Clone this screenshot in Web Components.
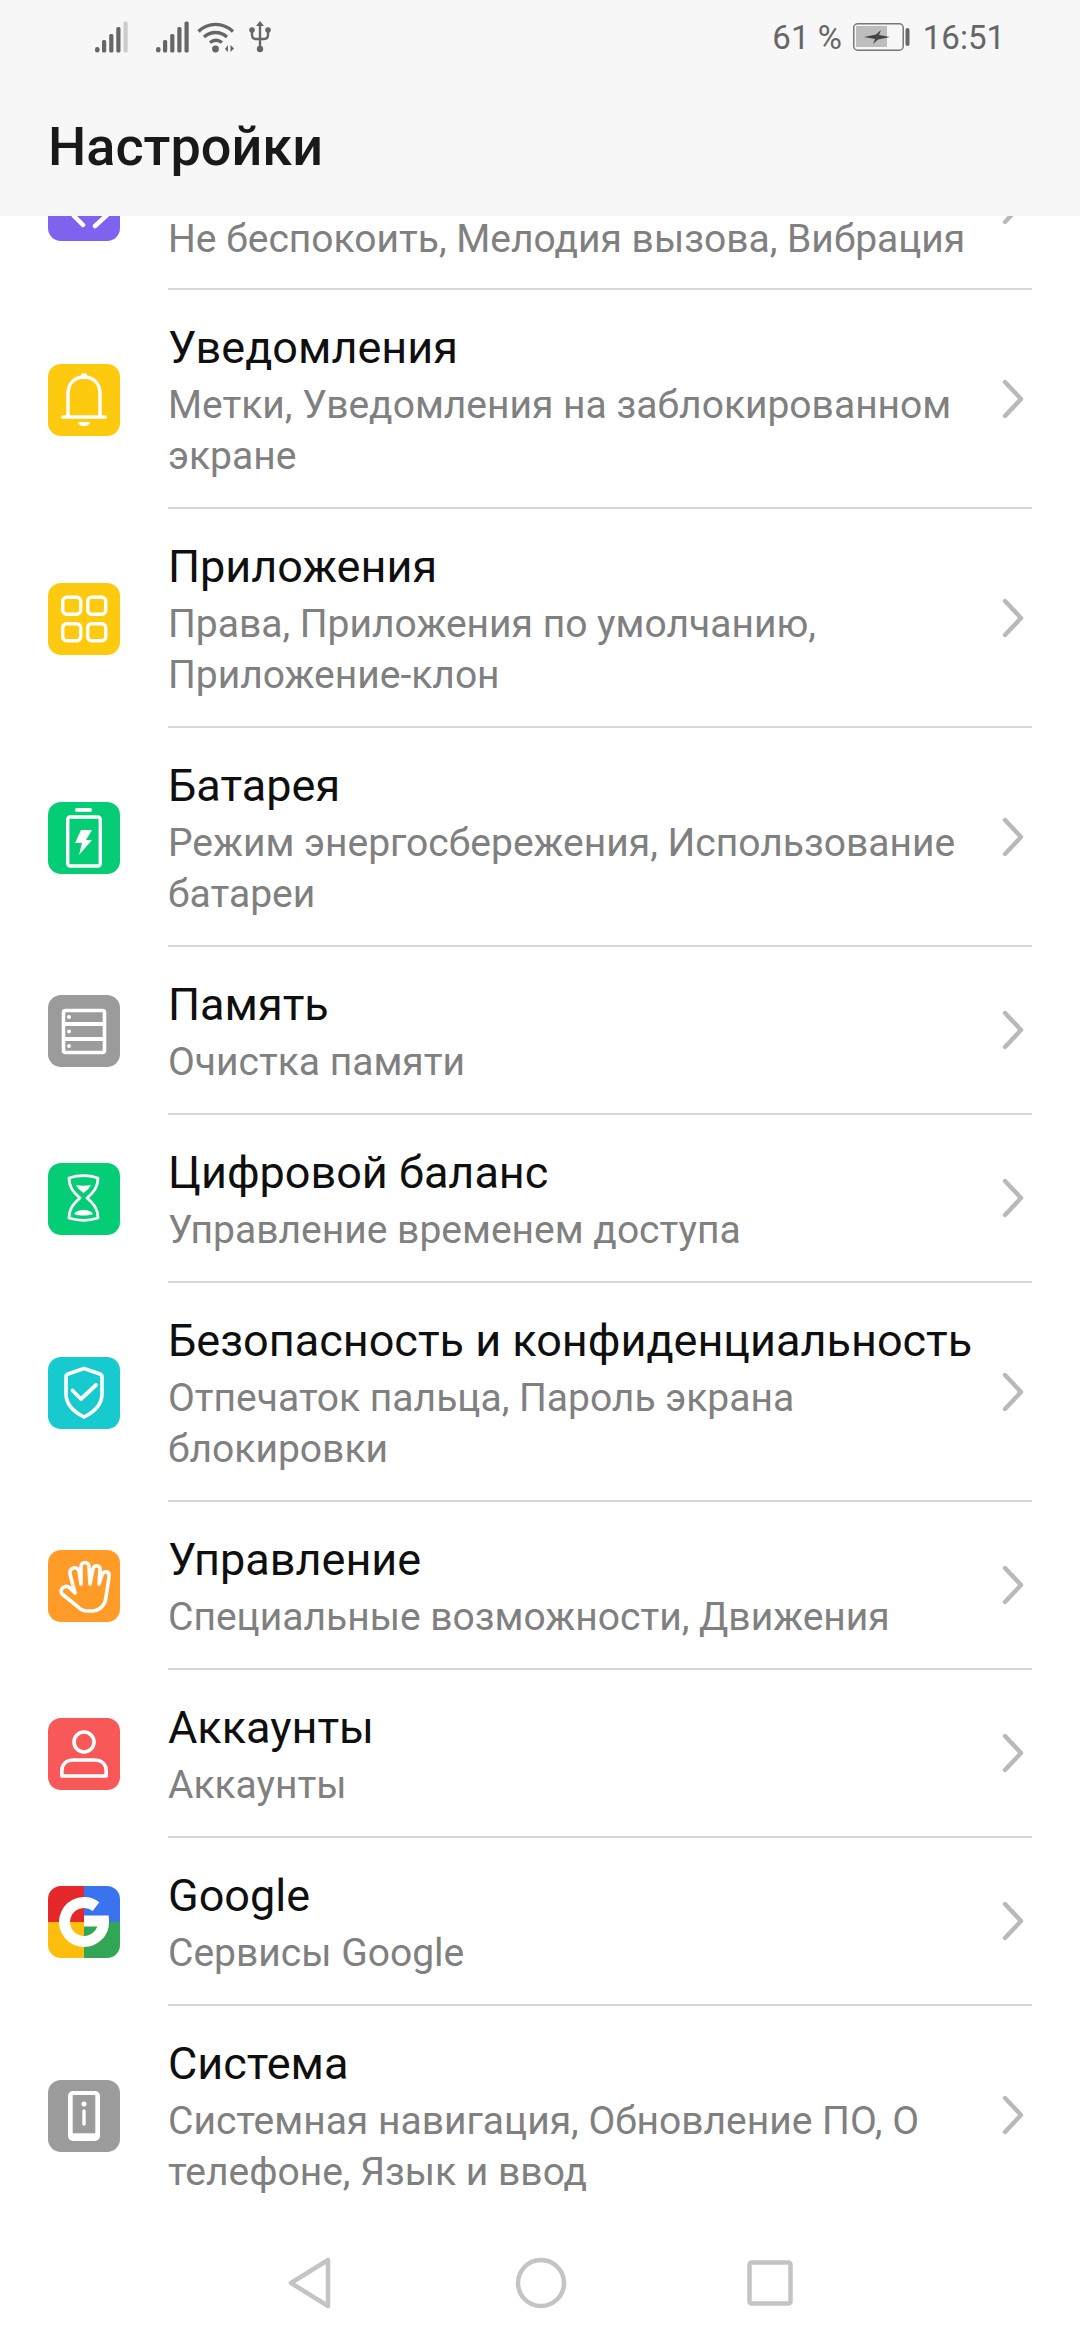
<!DOCTYPE html>
<html lang="ru">
<head>
<meta charset="utf-8">
<title>Настройки</title>
<style>
  html, body { margin: 0; height: 100%; background: #fff; }
  body { font-family: Roboto, "Noto Sans", sans-serif; }
</style>
</head>
<body>
<settings-app>
  <status-bar slot="status"></status-bar>
  <page-title slot="title">Настройки</page-title>

  <settings-row cut>
    <svg slot="icon" viewBox="0 0 72 72"><rect width="72" height="72" rx="13" fill="#7f63ee"/><path d="M35 56L26 47M47 57l12-11" fill="none" stroke="#fff" stroke-width="4.500" stroke-linecap="round"/></svg>
    <span slot="sub">Не беспокоить, Мелодия вызова, Вибрация</span>
  </settings-row>

  <settings-row>
    <svg slot="icon" viewBox="0 0 72 72"><rect width="72" height="72" rx="13" fill="#fdca10"/><path d="M20 52V30c0-11 7-17 16-17s16 6 16 17v22" fill="none" stroke="#fff" stroke-width="3.400"/><path d="M15 53h42" stroke="#fff" stroke-width="3.600" stroke-linecap="round"/><circle cx="36" cy="12" r="3" fill="#fff"/><path d="M30 58h12c-1 3-3 4-6 4s-5-1-6-4z" fill="#fff"/></svg>
    <span slot="title">Уведомления</span>
    <span slot="sub">Метки, Уведомления на заблокированном экране</span>
  </settings-row>

  <settings-row>
    <svg slot="icon" viewBox="0 0 72 72"><rect width="72" height="72" rx="13" fill="#fdca10"/><g fill="none" stroke="#fff" stroke-width="3.400"><rect x="14.700" y="14.300" width="18" height="17" rx="4"/><rect x="39.700" y="14.300" width="18" height="17" rx="4"/><rect x="14.700" y="40.700" width="18" height="17" rx="4"/><rect x="39.700" y="40.700" width="18" height="17" rx="4"/></g></svg>
    <span slot="title">Приложения</span>
    <span slot="sub">Права, Приложения по умолчанию, Приложение-клон</span>
  </settings-row>

  <settings-row>
    <svg slot="icon" viewBox="0 0 72 72"><rect width="72" height="72" rx="13" fill="#05cd75"/><rect x="27" y="6" width="17" height="3.800" rx="1.900" fill="#fff"/><rect x="19.700" y="15" width="32.600" height="49" rx="2.500" fill="none" stroke="#fff" stroke-width="3.400"/><path d="M33 28h11l-6 10h6L31 53l3-12h-7z" fill="#fff"/></svg>
    <span slot="title">Батарея</span>
    <span slot="sub">Режим энергосбережения, Использование батареи</span>
  </settings-row>

  <settings-row>
    <svg slot="icon" viewBox="0 0 72 72"><rect width="72" height="72" rx="13" fill="#9b9b9b"/><rect x="15.500" y="15.500" width="41" height="42" rx="2" fill="none" stroke="#fff" stroke-width="3.600"/><path d="M15 29h42M15 44h42" stroke="#fff" stroke-width="4"/><g fill="#fff"><circle cx="21" cy="22" r="2"/><circle cx="21" cy="36.500" r="2"/><circle cx="21" cy="51" r="2"/></g></svg>
    <span slot="title">Память</span>
    <span slot="sub">Очистка памяти</span>
  </settings-row>

  <settings-row>
    <svg slot="icon" viewBox="0 0 72 72"><rect width="72" height="72" rx="13" fill="#05cd75"/><path d="M21 15c9-3 20-3 29 0 0 8-3 13-11 20 8 7 11 12 11 20-9 3-20 3-29 0 0-8 3-13 11-20-8-7-11-12-11-20z" fill="none" stroke="#fff" stroke-width="2.800" stroke-linejoin="round"/><path d="M28 22c5 1 10 1 15 0-1 3-4 5-7.500 8C32 27 29 25 28 22zM26 51c2-3 5-4 9.500-4s7.500 1 9.500 4c-6 2-13 2-19 0z" fill="#fff"/></svg>
    <span slot="title">Цифровой баланс</span>
    <span slot="sub">Управление временем доступа</span>
  </settings-row>

  <settings-row>
    <svg slot="icon" viewBox="0 0 72 72"><rect width="72" height="72" rx="13" fill="#17cad0"/><path d="M36 11.500L52 17c1.500.5 2 1.500 2 3v17c0 11-8 18-18 23-10-5-18-12-18-23V20c0-1.500.5-2.500 2-3z" fill="none" stroke="#fff" stroke-width="3.600" stroke-linejoin="round"/><path d="M24.500 33.500L33 42l15-14" fill="none" stroke="#fff" stroke-width="3.800" stroke-linecap="round" stroke-linejoin="round"/></svg>
    <span slot="title">Безопасность и конфиденциальность</span>
    <span slot="sub">Отпечаток пальца, Пароль экрана блокировки</span>
  </settings-row>

  <settings-row>
    <svg slot="icon" viewBox="0 0 72 72"><rect width="72" height="72" rx="13" fill="#ff9b26"/><path d="M14 44c-3-5 3-10 8-6l5 5-5-19c-1-6 7-9 9-3l2 13V17c0-6 8-6 8 0l1 17 3-15c1-5 8-4 7 1l-1 14 3-9c2-5 8-4 7 2l-3 20c-1 9-7 14-14 14h-5c-4 0-7-2-10-5z" fill="none" stroke="#fff" stroke-width="3.600" stroke-linejoin="round"/></svg>
    <span slot="title">Управление</span>
    <span slot="sub">Специальные возможности, Движения</span>
  </settings-row>

  <settings-row>
    <svg slot="icon" viewBox="0 0 72 72"><rect width="72" height="72" rx="13" fill="#f95858"/><circle cx="36" cy="24" r="10" fill="none" stroke="#fff" stroke-width="3.600"/><path d="M13.800 58v-5c0-7 5-11 12-11h20.400c7 0 12 4 12 11v5z" fill="none" stroke="#fff" stroke-width="3.600" stroke-linejoin="round"/></svg>
    <span slot="title">Аккаунты</span>
    <span slot="sub">Аккаунты</span>
  </settings-row>

  <settings-row>
    <svg slot="icon" viewBox="0 0 72 72"><defs><clipPath id="g"><rect width="72" height="72" rx="13"/></clipPath></defs><g clip-path="url(#g)"><rect width="36" height="36" fill="#e5282b"/><rect x="36" width="36" height="36" fill="#3a73ee"/><rect y="36" width="36" height="36" fill="#fdbd0d"/><rect x="36" y="36" width="36" height="36" fill="#33a655"/></g><path d="M48 20.600A19.500 19.500 0 1 0 55.500 35H36" fill="none" stroke="#fff" stroke-width="11"/></svg>
    <span slot="title">Google</span>
    <span slot="sub">Сервисы Google</span>
  </settings-row>

  <settings-row last>
    <svg slot="icon" viewBox="0 0 72 72"><rect width="72" height="72" rx="13" fill="#9b9b9b"/><rect x="20" y="11" width="32" height="50" rx="5" fill="#fff"/><rect x="24.700" y="15" width="22.600" height="38.300" fill="#9b9b9b"/><circle cx="36" cy="24" r="2.500" fill="#fff"/><path d="M36 31v13" stroke="#fff" stroke-width="3.400" stroke-linecap="round"/></svg>
    <span slot="title">Система</span>
    <span slot="sub">Системная навигация, Обновление ПО, О телефоне, Язык и ввод</span>
  </settings-row>

  <nav-bar slot="nav"></nav-bar>
</settings-app>

<script>
class SettingsApp extends HTMLElement {
  constructor() {
    super();
    this.attachShadow({ mode: "open" });
    this.shadowRoot.innerHTML = `
      <style>
        :host { display: flex; flex-direction: column; height: 2340px; overflow: hidden; background: #fff; }
        header { background: #f7f7f7; height: 216px; flex: none; }
        main { flex: 1; overflow: hidden; }
      </style>
      <header><slot name="status"></slot><slot name="title"></slot></header>
      <main><slot></slot></main>
      <slot name="nav"></slot>`;
  }
}

class StatusBar extends HTMLElement {
  constructor() {
    super();
    this.attachShadow({ mode: "open" });
    this.shadowRoot.innerHTML = `
      <style>
        :host { display: flex; align-items: center; height: 74px; padding: 0 75px 0 95px; color: #666; font-size: 33px; }
        svg { display: block; flex: none; }
        .spacer { flex: 1; }
        .pct { margin-right: 11px; }
        .time { margin-left: 13px; }
      </style>
      <svg width="33" height="32" viewBox="0 0 33 32" style="margin-right:28px">
        <g fill="#666"><rect x="0" y="26" width="4.500" height="5.500" rx="2.200"/><rect x="7" y="19" width="4.200" height="12.500" rx="1.500"/><rect x="14.200" y="13" width="4.200" height="18.500" rx="1.500"/><rect x="21.300" y="6" width="4.200" height="25.500" rx="1.500"/></g>
        <rect x="28.500" y=".5" width="4.200" height="31" rx="1.500" fill="#ccc"/>
      </svg>
      <svg width="33" height="32" viewBox="0 0 33 32" style="margin-right:8px">
        <g fill="#666"><rect x="0" y="26" width="4.500" height="5.500" rx="2.200"/><rect x="7" y="19" width="4.200" height="12.500" rx="1.500"/><rect x="14.200" y="13" width="4.200" height="18.500" rx="1.500"/><rect x="21.300" y="6" width="4.200" height="25.500" rx="1.500"/><rect x="28.500" y=".5" width="4.200" height="31" rx="1.500"/></g>
      </svg>
      <svg width="38" height="32" viewBox="0 0 38 32" style="margin-right:14px">
        <g fill="none" stroke="#666" stroke-width="3.400"><path d="M1.500 10.500C11 1 26 1 36 10.500"/><path d="M7 16c7-6 16-6 23 0"/><path d="M13 21.500c4-3 8-3 12 0"/></g>
        <circle cx="18.500" cy="28" r="3.400" fill="#666"/>
        <path d="M28 28l3-4v7zM33.500 24l3.500 3.500-3.500 3.500z" fill="#666"/>
      </svg>
      <svg width="22" height="32" viewBox="0 0 22 32">
        <g fill="none" stroke="#666" stroke-width="2.400"><path d="M11 4v24"/><path d="M3 10v4c0 3 2 4 4 4h8c3 0 4-1 4-4v-4"/></g>
        <path d="M11 0l4 5H7z" fill="#666"/><circle cx="11" cy="28" r="3.200" fill="#666"/><circle cx="3" cy="9" r="2.800" fill="#666"/><circle cx="19" cy="9" r="2.800" fill="#666"/>
      </svg>
      <span class="spacer"></span>
      <span class="pct">61 %</span>
      <svg width="57" height="28" viewBox="0 0 57 28">
        <rect x=".75" y=".75" width="49.500" height="26.500" rx="4" fill="none" stroke="#777" stroke-width="1.500"/>
        <rect x="3" y="3" width="31" height="21" fill="#bdbdbd"/>
        <path d="M11 14l12-2.500L28 7l-2 5 11 2-12 2.500L20 21l2-5z" fill="#444"/>
        <rect x="52.500" y="5" width="4" height="18" rx="2" fill="#666"/>
      </svg>
      <span class="time">16:51</span>`;
  }
}

class PageTitle extends HTMLElement {
  constructor() {
    super();
    this.attachShadow({ mode: "open" });
    this.shadowRoot.innerHTML = `
      <style>
        :host { display: block; padding: 37px 0 0 48px; font-size: 54px; font-weight: 500; line-height: 72px; color: #191919; }
      </style>
      <slot></slot>`;
  }
}

const rowTemplate = document.createElement("template");
rowTemplate.innerHTML = `
  <style>
    :host { display: flex; align-items: center; padding-left: 48px; }
    :host([cut]) { height: 74px; overflow: hidden; align-items: flex-end; }
    .icon { flex: none; width: 72px; height: 72px; margin-right: 48px; }
    :host([cut]) .icon { margin-bottom: 49px; }
    ::slotted(svg) { display: block; width: 72px; height: 72px; }
    .body { flex: 1; margin-right: 48px; display: flex; align-items: center; border-bottom: 2px solid #d6d6d6; padding: 25px 0 25px; }
    :host([cut]) .body { padding: 0 0 26px; align-items: flex-end; }
    :host([last]) .body { border-bottom-color: transparent; }
    .text { flex: 1; min-width: 0; }
    .title { font-size: 45px; line-height: 65px; color: #0f0f0f; }
    .sub { font-size: 39px; line-height: 51px; color: #808080; padding-right: 14px; }
    :host([cut]) .sub { line-height: 46px; }
    .chev { flex: none; width: 26px; height: 40px; margin-right: 6px; }
    :host([cut]) .chev { margin-bottom: 37px; }
  </style>
  <div class="icon"><slot name="icon"></slot></div>
  <div class="body">
    <div class="text">
      <div class="title"><slot name="title"></slot></div>
      <div class="sub"><slot name="sub"></slot></div>
    </div>
    <svg class="chev" viewBox="0 0 26 40"><path d="M5 3l16 17L5 37" fill="none" stroke="#b9b9b9" stroke-width="4.400" stroke-linecap="round" stroke-linejoin="round"/></svg>
  </div>`;

class SettingsRow extends HTMLElement {
  constructor() {
    super();
    this.attachShadow({ mode: "open" });
    this.shadowRoot.appendChild(rowTemplate.content.cloneNode(true));
  }
}

class NavBar extends HTMLElement {
  constructor() {
    super();
    this.attachShadow({ mode: "open" });
    this.shadowRoot.innerHTML = `
      <style>
        :host { display: flex; flex: none; height: 115px; justify-content: center; align-items: center; background: #fff; }
        svg { display: block; fill: none; stroke: #c4c4c4; stroke-width: 4.500; stroke-linejoin: round; }
      </style>
      <svg width="44" height="52" viewBox="0 0 44 52" style="margin-right:183px"><path d="M40 3L3 26l37 23z"/></svg>
      <svg width="52" height="52" viewBox="0 0 52 52"><circle cx="26" cy="26" r="23"/></svg>
      <svg width="46" height="46" viewBox="0 0 46 46" style="margin-left:180px"><rect x="2.500" y="2.500" width="41" height="41" rx="2"/></svg>`;
  }
}

customElements.define("settings-app", SettingsApp);
customElements.define("status-bar", StatusBar);
customElements.define("page-title", PageTitle);
customElements.define("settings-row", SettingsRow);
customElements.define("nav-bar", NavBar);
</script>
</body>
</html>
